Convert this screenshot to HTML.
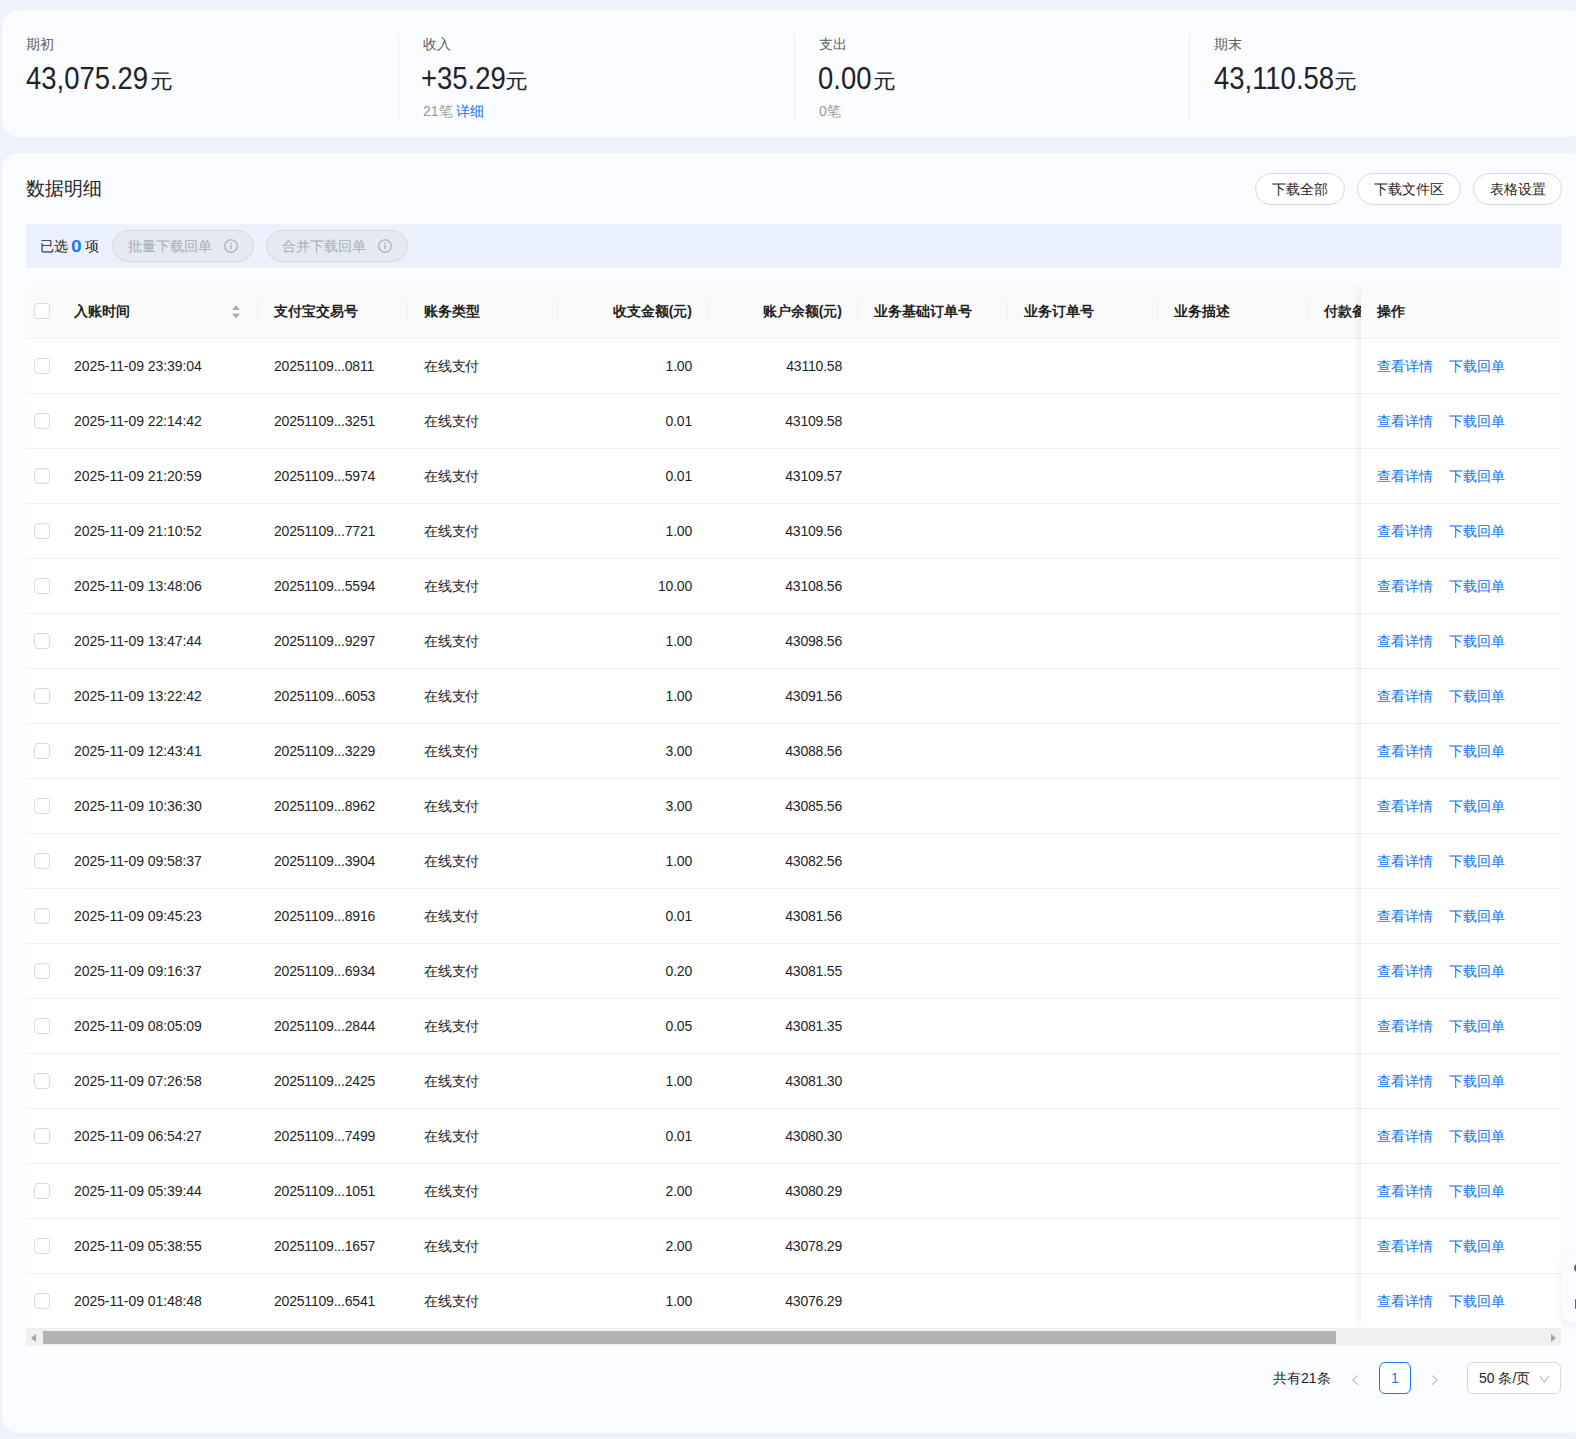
<!DOCTYPE html><html><head><meta charset="utf-8"><style>*{box-sizing:border-box;margin:0;padding:0}
html,body{width:1576px;height:1439px;overflow:hidden}
body{background:#eef2fa;font-family:"Liberation Sans",sans-serif;color:#1f1f1f;position:relative}
.card1{position:absolute;left:2px;top:10px;width:1583px;height:127px;background:#fafcff;border-radius:16px}
.stat{position:absolute;top:24px;height:87px;padding-left:24px}
.s0{left:0}.s1{left:396px;border-left:1px solid #ebebeb}.s2{left:792px;border-left:1px solid #ebebeb}.s3{left:1187px;border-left:1px solid #ebebeb}
.lbl{position:absolute;left:24px;top:0;font-size:14px;color:#5c5c5c;line-height:20px;white-space:nowrap}
.val{position:absolute;left:24px;top:29px;height:32px;line-height:32px;white-space:nowrap}
.num{font-size:31px;color:#222;display:inline-block;transform:scaleX(0.885);transform-origin:0 0}
.yuan{font-size:20px;color:#222;position:absolute;top:2px;display:inline-block;transform:scaleX(1.14);transform-origin:0 0}
.sub{position:absolute;left:24px;top:67px;font-size:14px;color:#999;line-height:20px;white-space:nowrap}
.lnk{color:#1270f5}
.card2{position:absolute;left:2px;top:153px;width:1583px;height:1280px;background:#fafcff;border-radius:16px}
.title{position:absolute;left:24px;top:24px;font-size:18.5px;line-height:24px;color:#1f1f1f}
.btn{position:absolute;top:20px;height:32px;line-height:30px;border:1px solid #d9d9d9;border-radius:16px;background:#fff;font-size:14px;text-align:center;color:#1f1f1f}
.b1{left:1253px;width:90px}.b2{left:1355px;width:104px}.b3{left:1471px;width:89px}
.selbar{position:absolute;left:24px;top:71px;width:1535px;height:44px;background:#ecf2fd}
.seltxt{position:absolute;left:14px;top:0;line-height:44px;font-size:14px}
.seltxt b{color:#1677ff;font-size:17px;font-weight:700;margin:0 -1px 0 -1px;display:inline-block;transform:scaleX(1.12);transform-origin:0 0;width:11px;position:relative;top:1px}
.pill{position:absolute;top:6px;height:32px;line-height:30px;border:1px solid #d9d9d9;border-radius:16px;background:#e4e9f2;color:#a9adb5;font-size:14px;padding-left:15px}
.p1{left:86px;width:142px}.p2{left:240px;width:142px}
.info{position:absolute;right:15px;top:8px}
.table{position:absolute;left:24px;top:131px;width:1535px;height:1062px;background:#fff;border-radius:8px 0 0 0;overflow:hidden}
.thead{position:absolute;left:0;top:0;width:1535px;height:55px;background:#fafafa;border-bottom:1px solid #f0f0f0}
.th{position:absolute;top:0;height:54px;line-height:54px;font-size:14px;font-weight:bold;padding:0 16px;white-space:nowrap}
.tr{position:absolute;left:0;width:1535px;height:55px;border-bottom:1px solid #f0f0f0}
.td{position:absolute;top:0;height:54px;line-height:54px;font-size:14px;padding:0 16px;white-space:nowrap;letter-spacing:-0.2px}
.c0{left:0;width:32px;padding:0}
.c1{left:32px;width:200px;letter-spacing:-0.07px}.c2{left:232px;width:150px}.c3{left:382px;width:150px}.c4{left:532px;width:150px}.c5{left:682px;width:150px}.c6{left:832px;width:150px}.c7{left:982px;width:150px}.c8{left:1132px;width:150px}.c9{left:1282px;width:150px}
.r{text-align:right}
.sep{position:absolute;left:-1px;top:16px;width:1px;height:22px;background:#f0f0f0}
.c1 .sep{display:none}
.sort{position:absolute;right:18px;top:20.5px}
.cb{position:absolute;left:8px;top:19px;width:16px;height:16px;border:1px solid #d9d9d9;border-radius:4px;background:#fff}
.fixed{position:absolute;left:1335px;top:0;width:200px;height:1045px;background:#fff;box-shadow:-8px 0 8px -6px rgba(0,0,0,0.08)}
.fth{height:55px;line-height:54px;background:#fafafa;border-bottom:1px solid #f0f0f0;font-size:14px;font-weight:bold;padding-left:16px}
.ftd{height:55px;line-height:54px;border-bottom:1px solid #f0f0f0;font-size:14px;padding-left:16px}
.l2{margin-left:16px}
.sbar{position:absolute;left:0;top:1044px;width:1535px;height:18px;background:#f0f0f0}
.thumb{position:absolute;left:17px;top:3px;width:1293px;height:13px;background:#b3b3b3}
.al{position:absolute;left:5px;top:6px;width:0;height:0;border-top:4px solid transparent;border-bottom:4px solid transparent;border-right:5px solid #a3a3a3}
.ar{position:absolute;right:5px;top:6px;width:0;height:0;border-top:4px solid transparent;border-bottom:4px solid transparent;border-left:5px solid #a3a3a3}
.pg{position:absolute;left:0;top:1209px;width:1583px;height:32px}
.total{position:absolute;left:1271px;top:0;line-height:32px;font-size:14px}
.prev,.next{position:absolute;top:13px;width:10px;height:11px}
.prev{left:1348px}.next{left:1428px}
.page{position:absolute;left:1377px;top:0;width:32px;height:32px;line-height:30px;text-align:center;border:1px solid #1677ff;border-radius:6px;color:#1677ff;font-size:14px;background:#fff}
.sel{position:absolute;left:1465px;top:0;width:94px;height:32px;line-height:30px;border:1px solid #d9d9d9;border-radius:6px;font-size:14px;padding-left:11px;background:#fff}
.chev{position:absolute;right:10px;top:11.5px}
.float{position:absolute;left:1561px;top:1254px;width:40px;height:69px;background:#fafcff;border-radius:10px;box-shadow:0 2px 8px rgba(0,0,0,0.08)}

.fi1{position:absolute;left:13px;top:9px;width:11px;height:10px;border:2px solid #5d6170;border-radius:50%}
.fi2{position:absolute;left:14px;top:45px;width:10px;height:10px;background:#5d6170;border-radius:1px}
</style></head><body>
<div class="card1">
<div class="stat s0"><div class="lbl">期初</div><div class="val"><span class="num" style="margin-left:0px">43,075.29</span><span class="yuan" style="left:124px">元</span></div></div>
<div class="stat s1"><div class="lbl">收入</div><div class="val"><span class="num" style="margin-left:-2px">+35.29</span><span class="yuan" style="left:82px">元</span></div><div class="sub">21笔 <span class="lnk">详细</span></div></div>
<div class="stat s2"><div class="lbl">支出</div><div class="val"><span class="num" style="margin-left:-1px">0.00</span><span class="yuan" style="left:54px">元</span></div><div class="sub">0笔</div></div>
<div class="stat s3"><div class="lbl">期末</div><div class="val"><span class="num" style="margin-left:-0.5px">43,110.58</span><span class="yuan" style="left:120px">元</span></div></div>
</div>
<div class="card2">
<div class="title">数据明细</div>
<div class="btn b1">下载全部</div><div class="btn b2">下载文件区</div><div class="btn b3">表格设置</div>
<div class="selbar"><span class="seltxt">已选 <b>0</b> 项</span>
<div class="pill p1">批量下载回单<svg class="info" width="14" height="14" viewBox="0 0 14 14"><circle cx="7" cy="7" r="6.3" fill="none" stroke="#a3a7ae" stroke-width="1.1"/><rect x="6.4" y="6" width="1.2" height="4.2" fill="#a3a7ae"/><rect x="6.4" y="3.8" width="1.2" height="1.2" fill="#a3a7ae"/></svg></div><div class="pill p2">合并下载回单<svg class="info" width="14" height="14" viewBox="0 0 14 14"><circle cx="7" cy="7" r="6.3" fill="none" stroke="#a3a7ae" stroke-width="1.1"/><rect x="6.4" y="6" width="1.2" height="4.2" fill="#a3a7ae"/><rect x="6.4" y="3.8" width="1.2" height="1.2" fill="#a3a7ae"/></svg></div></div>
<div class="table">
<div class="thead">
<div class="th c0"><span class="cb"></span></div>
<div class="th c1"><span class="tt">入账时间</span><svg class="sort" width="8" height="14" viewBox="0 0 8 14"><path d="M0 5 L4 0.3 L8 5 Z" fill="#aeaeae"/><path d="M0 8.6 L4 13.4 L8 8.6 Z" fill="#aeaeae"/></svg><i class="sep"></i></div>
<div class="th c2"><span class="tt">支付宝交易号</span><i class="sep"></i></div>
<div class="th c3"><span class="tt">账务类型</span><i class="sep"></i></div>
<div class="th c4 r"><span class="tt">收支金额(元)</span><i class="sep"></i></div>
<div class="th c5 r"><span class="tt">账户余额(元)</span><i class="sep"></i></div>
<div class="th c6"><span class="tt">业务基础订单号</span><i class="sep"></i></div>
<div class="th c7"><span class="tt">业务订单号</span><i class="sep"></i></div>
<div class="th c8"><span class="tt">业务描述</span><i class="sep"></i></div>
<div class="th c9"><span class="tt">付款备注</span><i class="sep"></i></div>
</div>
<div class="tr" style="top:55px">
<div class="td c0"><span class="cb"></span></div>
<div class="td c1">2025-11-09 23:39:04</div>
<div class="td c2">20251109...0811</div>
<div class="td c3">在线支付</div>
<div class="td c4 r">1.00</div>
<div class="td c5 r">43110.58</div>
</div>
<div class="tr" style="top:110px">
<div class="td c0"><span class="cb"></span></div>
<div class="td c1">2025-11-09 22:14:42</div>
<div class="td c2">20251109...3251</div>
<div class="td c3">在线支付</div>
<div class="td c4 r">0.01</div>
<div class="td c5 r">43109.58</div>
</div>
<div class="tr" style="top:165px">
<div class="td c0"><span class="cb"></span></div>
<div class="td c1">2025-11-09 21:20:59</div>
<div class="td c2">20251109...5974</div>
<div class="td c3">在线支付</div>
<div class="td c4 r">0.01</div>
<div class="td c5 r">43109.57</div>
</div>
<div class="tr" style="top:220px">
<div class="td c0"><span class="cb"></span></div>
<div class="td c1">2025-11-09 21:10:52</div>
<div class="td c2">20251109...7721</div>
<div class="td c3">在线支付</div>
<div class="td c4 r">1.00</div>
<div class="td c5 r">43109.56</div>
</div>
<div class="tr" style="top:275px">
<div class="td c0"><span class="cb"></span></div>
<div class="td c1">2025-11-09 13:48:06</div>
<div class="td c2">20251109...5594</div>
<div class="td c3">在线支付</div>
<div class="td c4 r">10.00</div>
<div class="td c5 r">43108.56</div>
</div>
<div class="tr" style="top:330px">
<div class="td c0"><span class="cb"></span></div>
<div class="td c1">2025-11-09 13:47:44</div>
<div class="td c2">20251109...9297</div>
<div class="td c3">在线支付</div>
<div class="td c4 r">1.00</div>
<div class="td c5 r">43098.56</div>
</div>
<div class="tr" style="top:385px">
<div class="td c0"><span class="cb"></span></div>
<div class="td c1">2025-11-09 13:22:42</div>
<div class="td c2">20251109...6053</div>
<div class="td c3">在线支付</div>
<div class="td c4 r">1.00</div>
<div class="td c5 r">43091.56</div>
</div>
<div class="tr" style="top:440px">
<div class="td c0"><span class="cb"></span></div>
<div class="td c1">2025-11-09 12:43:41</div>
<div class="td c2">20251109...3229</div>
<div class="td c3">在线支付</div>
<div class="td c4 r">3.00</div>
<div class="td c5 r">43088.56</div>
</div>
<div class="tr" style="top:495px">
<div class="td c0"><span class="cb"></span></div>
<div class="td c1">2025-11-09 10:36:30</div>
<div class="td c2">20251109...8962</div>
<div class="td c3">在线支付</div>
<div class="td c4 r">3.00</div>
<div class="td c5 r">43085.56</div>
</div>
<div class="tr" style="top:550px">
<div class="td c0"><span class="cb"></span></div>
<div class="td c1">2025-11-09 09:58:37</div>
<div class="td c2">20251109...3904</div>
<div class="td c3">在线支付</div>
<div class="td c4 r">1.00</div>
<div class="td c5 r">43082.56</div>
</div>
<div class="tr" style="top:605px">
<div class="td c0"><span class="cb"></span></div>
<div class="td c1">2025-11-09 09:45:23</div>
<div class="td c2">20251109...8916</div>
<div class="td c3">在线支付</div>
<div class="td c4 r">0.01</div>
<div class="td c5 r">43081.56</div>
</div>
<div class="tr" style="top:660px">
<div class="td c0"><span class="cb"></span></div>
<div class="td c1">2025-11-09 09:16:37</div>
<div class="td c2">20251109...6934</div>
<div class="td c3">在线支付</div>
<div class="td c4 r">0.20</div>
<div class="td c5 r">43081.55</div>
</div>
<div class="tr" style="top:715px">
<div class="td c0"><span class="cb"></span></div>
<div class="td c1">2025-11-09 08:05:09</div>
<div class="td c2">20251109...2844</div>
<div class="td c3">在线支付</div>
<div class="td c4 r">0.05</div>
<div class="td c5 r">43081.35</div>
</div>
<div class="tr" style="top:770px">
<div class="td c0"><span class="cb"></span></div>
<div class="td c1">2025-11-09 07:26:58</div>
<div class="td c2">20251109...2425</div>
<div class="td c3">在线支付</div>
<div class="td c4 r">1.00</div>
<div class="td c5 r">43081.30</div>
</div>
<div class="tr" style="top:825px">
<div class="td c0"><span class="cb"></span></div>
<div class="td c1">2025-11-09 06:54:27</div>
<div class="td c2">20251109...7499</div>
<div class="td c3">在线支付</div>
<div class="td c4 r">0.01</div>
<div class="td c5 r">43080.30</div>
</div>
<div class="tr" style="top:880px">
<div class="td c0"><span class="cb"></span></div>
<div class="td c1">2025-11-09 05:39:44</div>
<div class="td c2">20251109...1051</div>
<div class="td c3">在线支付</div>
<div class="td c4 r">2.00</div>
<div class="td c5 r">43080.29</div>
</div>
<div class="tr" style="top:935px">
<div class="td c0"><span class="cb"></span></div>
<div class="td c1">2025-11-09 05:38:55</div>
<div class="td c2">20251109...1657</div>
<div class="td c3">在线支付</div>
<div class="td c4 r">2.00</div>
<div class="td c5 r">43078.29</div>
</div>
<div class="tr" style="top:990px">
<div class="td c0"><span class="cb"></span></div>
<div class="td c1">2025-11-09 01:48:48</div>
<div class="td c2">20251109...6541</div>
<div class="td c3">在线支付</div>
<div class="td c4 r">1.00</div>
<div class="td c5 r">43076.29</div>
</div>
<div class="fixed"><div class="fth">操作</div>
<div class="ftd"><span class="lnk">查看详情</span><span class="lnk l2">下载回单</span></div>
<div class="ftd"><span class="lnk">查看详情</span><span class="lnk l2">下载回单</span></div>
<div class="ftd"><span class="lnk">查看详情</span><span class="lnk l2">下载回单</span></div>
<div class="ftd"><span class="lnk">查看详情</span><span class="lnk l2">下载回单</span></div>
<div class="ftd"><span class="lnk">查看详情</span><span class="lnk l2">下载回单</span></div>
<div class="ftd"><span class="lnk">查看详情</span><span class="lnk l2">下载回单</span></div>
<div class="ftd"><span class="lnk">查看详情</span><span class="lnk l2">下载回单</span></div>
<div class="ftd"><span class="lnk">查看详情</span><span class="lnk l2">下载回单</span></div>
<div class="ftd"><span class="lnk">查看详情</span><span class="lnk l2">下载回单</span></div>
<div class="ftd"><span class="lnk">查看详情</span><span class="lnk l2">下载回单</span></div>
<div class="ftd"><span class="lnk">查看详情</span><span class="lnk l2">下载回单</span></div>
<div class="ftd"><span class="lnk">查看详情</span><span class="lnk l2">下载回单</span></div>
<div class="ftd"><span class="lnk">查看详情</span><span class="lnk l2">下载回单</span></div>
<div class="ftd"><span class="lnk">查看详情</span><span class="lnk l2">下载回单</span></div>
<div class="ftd"><span class="lnk">查看详情</span><span class="lnk l2">下载回单</span></div>
<div class="ftd"><span class="lnk">查看详情</span><span class="lnk l2">下载回单</span></div>
<div class="ftd"><span class="lnk">查看详情</span><span class="lnk l2">下载回单</span></div>
<div class="ftd"><span class="lnk">查看详情</span><span class="lnk l2">下载回单</span></div>
</div>
<div class="sbar"><i class="al"></i><i class="thumb"></i><i class="ar"></i></div>
</div>
<div class="pg"><span class="total">共有21条</span><svg class="prev" viewBox="0 0 10 11"><path d="M8 0.5 L2.5 5.2 L8 9.8" fill="none" stroke="#c4c4c4" stroke-width="1.2"/></svg><span class="page">1</span><svg class="next" viewBox="0 0 10 11"><path d="M2 0.5 L7.5 5.2 L2 9.8" fill="none" stroke="#c4c4c4" stroke-width="1.2"/></svg><span class="sel">50 条/页<svg class="chev" width="11" height="8" viewBox="0 0 11 8"><path d="M0.8 0.8 L5.5 7 L10.2 0.8" fill="none" stroke="#bfbfbf" stroke-width="1.1"/></svg></span></div>
</div>
<div class="float"><i class="fi1"></i><i class="fi2"></i></div>
</body></html>
